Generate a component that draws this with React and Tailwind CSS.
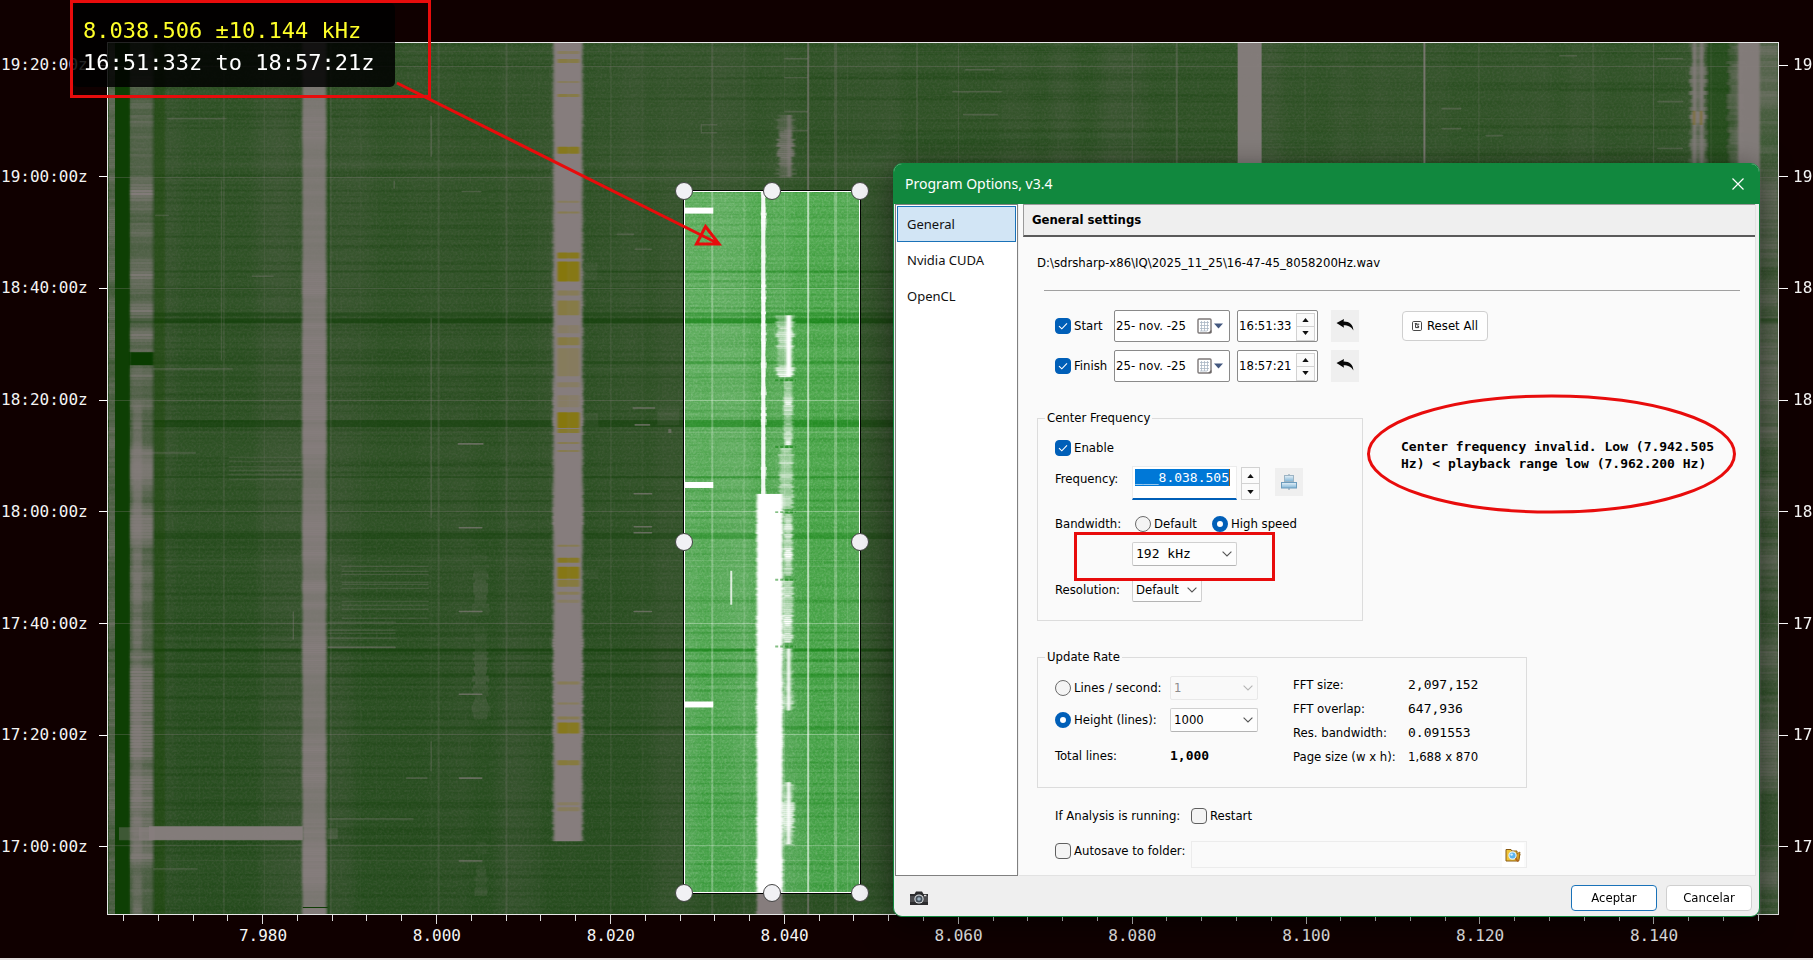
import React from "react";

const MONO = "font-['DejaVu_Sans_Mono','Liberation_Mono',monospace]";
const UI = "font-['DejaVu_Sans_Condensed','DejaVu_Sans',sans-serif]";
const SHELL = "font-['Noto_Sans','Open_Sans',sans-serif]";

/* ---------- spectrogram ---------- */

function prng(seed) {
  let s = seed;
  return () => {
    s = (s * 1664525 + 1013904223) % 4294967296;
    return s / 4294967296;
  };
}

function Column({ x, w, from = 42, to = 915, step = 3, min, max, seed, fill = "#fff", jitter = 0 }) {
  const rnd = prng(seed);
  const out = [];
  let level = rnd();
  for (let y = from; y < to; y += step) {
    level = Math.min(1, Math.max(0, level + (rnd() - 0.5) * 0.7));
    const a = min + (max - min) * level;
    const j = jitter * rnd();
    out.push(
      <rect key={y} x={x - j} y={y} width={w + 2 * j} height={Math.min(step, to - y)} fill={fill} opacity={a.toFixed(2)} />
    );
  }
  return <g>{out}</g>;
}

const faintLines = [
  [222, 2, 0.16], [329, 2, 0.16], [263, 1, 0.18], [437, 2, 0.2], [430, 1, 0.1], [505, 2, 0.22], [538, 1, 0.08],
  [610, 1, 0.25], [641, 2, 0.08], [711, 2, 0.26], [743, 2, 0.12], [784, 1, 0.14], [807, 2, 0.6], [834, 3, 0.25],
  [847, 1, 0.12], [916, 2, 0.2], [958, 1, 0.2], [1132, 1, 0.3], [1176, 2, 0.35], [1305, 1, 0.2], [1424, 2, 0.8],
  [1479, 1, 0.25], [1593, 2, 0.15], [1654, 1, 0.3], [1711, 2, 0.2], [198, 1, 0.06], [359, 1, 0.08], [375, 1, 0.06],
];

const darkBands = [
  [270, 2, 0.3], [287, 2, 0.25], [312, 4, 0.35], [318, 5, 0.6], [361, 3, 0.3], [376, 2, 0.2], [420, 7, 0.5], [476, 2, 0.3],
  [500, 2, 0.15], [533, 6, 0.35], [600, 2, 0.2], [632, 2, 0.2], [649, 3, 0.6], [660, 2, 0.2], [674, 4, 0.35], [727, 3, 0.3],
  [803, 2, 0.25], [235, 2, 0.2], [780, 1, 0.15],
];

const lightBands = [
  [117, 1, 0.1], [145, 2, 0.08], [155, 2, 0.08], [162, 3, 0.1], [178, 2, 0.1], [166, 1, 0.1], [50, 1, 0.12], [431, 2, 0.14],
  [330, 1, 0.08], [368, 1, 0.1], [560, 1, 0.12], [566, 1, 0.12], [664, 1, 0.1], [638, 1, 0.1], [687, 1, 0.1], [788, 1, 0.12], [861, 1, 0.12],
];

const dashes = [
  [457, 443, 26], [458, 527, 24], [458, 611, 24], [458, 694, 24], [458, 778, 24], [458, 861, 24],
  [632, 407, 23], [633, 493, 19], [633, 526, 19], [633, 532, 19], [633, 611, 19], [634, 424, 16],
  [616, 233, 18], [634, 248, 18], [461, 190, 20], [784, 57, 24], [784, 76, 24], [784, 110, 24], [784, 129, 24],
  [1442, 107, 20], [1442, 127, 20], [1486, 134, 18], [1560, 54, 18], [1658, 57, 26], [1658, 100, 26], [1658, 147, 26],
  [166, 117, 60], [154, 214, 14], [251, 275, 22], [152, 368, 80], [140, 452, 55], [152, 869, 45], [327, 647, 68],
  [327, 819, 86], [405, 778, 22], [952, 90, 50], [965, 68, 30], [963, 113, 35],
];

const combs = [
  [228, 73, [457, 461, 466, 470, 474, 479]],
  [341, 87, [566, 571, 574, 582, 584, 588, 601, 605, 609, 618]],
  [327, 68, [622, 630, 633, 638, 647]],
];

const yellows = [
  [50, 3, 0.3], [58, 4, 0.5], [80, 2, 0.3], [93, 3, 0.5], [146, 7, 0.85], [200, 2, 0.3], [211, 2, 0.4], [252, 6, 0.9],
  [261, 20, 1], [290, 5, 0.35], [300, 15, 0.5], [325, 8, 0.2], [337, 8, 0.5], [348, 28, 0.3], [382, 5, 0.25], [395, 12, 0.2],
  [412, 16, 1], [429, 4, 0.7], [442, 2, 0.4], [450, 2, 0.4], [545, 2, 0.4], [558, 5, 0.8], [567, 12, 0.95], [580, 7, 0.6],
  [592, 3, 0.35], [600, 3, 0.25], [682, 3, 0.35], [703, 2, 0.3], [717, 3, 0.4], [723, 11, 0.85], [761, 5, 0.6], [803, 3, 0.25], [808, 4, 0.3],
];

function Spectrogram() {
  const hGrid = [65, 176, 288, 400, 511, 623, 735, 846];
  return (
    <svg className="block h-full w-full" viewBox="107 42 1672 873" preserveAspectRatio="none" aria-hidden="true">
      <defs>
        <linearGradient id="base" x1="0" y1="0" x2="0" y2="1">
          <stop offset="0" stopColor="#53aa52" />
          <stop offset="0.45" stopColor="#4da74c" />
          <stop offset="1" stopColor="#409f42" />
        </linearGradient>
        <filter id="streaks" x="0" y="0" width="100%" height="100%" colorInterpolationFilters="sRGB">
          <feTurbulence type="fractalNoise" baseFrequency="0.0015 0.3" numOctaves="2" seed="4" />
          <feColorMatrix values="0 0 0 0 0  0 0 0 0 0.45  0 0 0 0 0  0.8 0 0 0 -0.36" />
        </filter>
        <filter id="grain" x="0" y="0" width="100%" height="100%" colorInterpolationFilters="sRGB">
          <feTurbulence type="fractalNoise" baseFrequency="0.45 0.45" numOctaves="2" seed="9" />
          <feColorMatrix values="0 0 0 0 1  0 0 0 0 1  0 0 0 0 1  0.36 0 0 0 -0.14" />
        </filter>
        <filter id="bars" x="0" y="0" width="100%" height="100%" colorInterpolationFilters="sRGB">
          <feTurbulence type="fractalNoise" baseFrequency="0.02 0.0008" numOctaves="2" seed="12" />
          <feColorMatrix values="0 0 0 0 1  0 0 0 0 0.9  0 0 0 0 1  0.45 0 0 0 -0.19" />
        </filter>
        <filter id="soft" x="-20%" y="-5%" width="140%" height="110%">
          <feGaussianBlur stdDeviation="1.2 0.3" />
        </filter>
      </defs>

      <rect x="107" y="42" width="1672" height="873" fill="url(#base)" />
      <rect x="107" y="42" width="1672" height="873" filter="url(#bars)" />
      <rect x="107" y="42" width="1672" height="873" filter="url(#streaks)" />
      <rect x="107" y="42" width="1672" height="873" filter="url(#grain)" />
      {darkBands.map(([y, h, a]) => (
        <rect key={y} x="107" y={y} width="1672" height={h} fill="#067a06" opacity={a} />
      ))}
      {lightBands.map(([y, h, a]) => (
        <rect key={y} x="107" y={y} width="1672" height={h} fill="#fff" opacity={a} />
      ))}
      {faintLines.map(([x, w, a]) => (
        <rect key={x} x={x} y="42" width={w} height="873" fill="#fff" opacity={a} />
      ))}

      {/* left edge */}
      <Column x={108} w={6} min={0.25} max={0.6} seed={3} step={2} />
      <rect x="114" y="42" width="15" height="873" fill="#0c800a" />
      <g filter="url(#soft)">
        <rect x="150" y="42" width="14" height="873" fill="#178a10" opacity="0.4" />
        <Column x={129} w={23} min={0.3} max={0.95} seed={21} step={3} to={352} />
        <rect x="129" y="352" width="23" height="13" fill="#067a06" />
        <Column x={129} w={23} min={0.3} max={0.85} seed={8} step={3} from={365} />
        <Column x={132} w={9} min={0.1} max={0.6} seed={77} step={4} from={365} />
      </g>
      <g filter="url(#soft)">
        <rect x="302" y="42" width="23" height="873" fill="#fff" opacity="0.82" />
        <Column x={301} w={25} min={0.2} max={0.9} seed={5} step={2} />
      </g>
      <rect x="327" y="42" width="2" height="873" fill="#0c800a" opacity="0.3" />
      <rect x="118" y="828" width="35" height="13" fill="#fff" opacity="0.4" />
      <rect x="138" y="828" width="16" height="13" fill="#fff" opacity="0.6" />
      <rect x="148" y="827" width="154" height="14" fill="#fff" opacity="0.97" />
      <rect x="327" y="829" width="10" height="11" fill="#fff" opacity="0.25" />
      <rect x="302" y="908" width="25" height="1" fill="#0a7a08" />

      {/* wide carrier with saturated bursts */}
      <g filter="url(#soft)">
        <rect x="554" y="42" width="27" height="800" fill="#fff" />
        <Column x={553} w={29} to={842} min={0.6} max={1} seed={14} step={3} jitter={1.5} />
      </g>
      <g filter="url(#soft)">
        {yellows.map(([y, h, a]) => (
          <g key={y} fill="#fff31c" opacity={a}>
            <rect x="557" y={y} width="11" height={h} rx="1" />
            <rect x="568" y={y} width="11" height={h} rx="1" opacity="0.94" />
          </g>
        ))}
      </g>
      <rect x="584" y="262" width="13" height="18" fill="#fff" opacity="0.1" />
      <rect x="584" y="413" width="14" height="14" fill="#fff" opacity="0.12" />
      <rect x="584" y="570" width="14" height="9" fill="#fff" opacity="0.1" />

      {/* short bursts */}
      {dashes.map(([x, y, w], i) => (
        <rect key={i} x={x} y={y} width={w} height="1.6" rx="0.8" fill="#fff" opacity={i < 12 ? 0.65 : 0.35} />
      ))}
      {combs.map(([x, w, ys]) =>
        ys.map((y) => <rect key={x + "-" + y} x={x} y={y} width={w} height="1" fill="#fff" opacity="0.35" />)
      )}
      <Column x={475} w={10} from={550} to={720} min={0} max={0.25} seed={31} step={3} jitter={4} />
      <Column x={476} w={9} from={840} to={897} min={0} max={0.25} seed={34} step={3} jitter={3} />
      <rect x="430" y="115" width="1" height="41" fill="#fff" opacity="0.5" />
      <rect x="292" y="612" width="1" height="28" fill="#fff" opacity="0.5" />
      <rect x="220" y="180" width="1" height="180" fill="#fff" opacity="0.3" />
      <rect x="430" y="318" width="1" height="200" fill="#fff" opacity="0.4" />
      <rect x="393" y="180" width="1" height="8" fill="#fff" opacity="0.5" />
      <rect x="430" y="742" width="1" height="30" fill="#fff" opacity="0.4" />
      <rect x="668" y="429" width="3" height="4" fill="#fff" opacity="0.6" />
      <path d="M701 123v10M701 124h16M701 132h16" stroke="#fff" strokeWidth="1.4" opacity="0.3" fill="none" />
      <Column x={657} w={22} from={406} to={425} min={0} max={0.2} seed={90} step={3} />

      {/* signals inside the selected range */}
      <rect x="761" y="191" width="4" height="303" fill="#fff" opacity="0.9" />
      <Column x={762} w={3} from={191} to={494} min={0.2} max={0.9} seed={41} step={3} jitter={1.5} />
      <g filter="url(#soft)">
        <rect x="757" y="494" width="25" height="421" fill="#fff" />
        <Column x={757} w={25} from={494} to={915} min={0.4} max={1} seed={42} step={2} jitter={1.5} />
      </g>
      <g filter="url(#soft)">
        <Column x={780} w={11} from={114} to={177} min={0.3} max={0.8} seed={43} step={2} jitter={5} />
        <rect x="787" y="114" width="4" height="62" fill="#fff" opacity="0.6" />
        <Column x={779} w={12} from={315} to={377} min={0.3} max={1} seed={44} step={2} jitter={4} />
        <rect x="786" y="315" width="5" height="61" fill="#fff" />
        <Column x={785} w={6} from={381} to={445} min={0.4} max={1} seed={45} step={2} jitter={2} />
        <Column x={781} w={10} from={448} to={509} min={0.4} max={1} seed={46} step={2} jitter={3} />
        <Column x={785} w={6} from={514} to={576} min={0.4} max={1} seed={47} step={2} jitter={2} />
        <Column x={784} w={7} from={581} to={643} min={0.4} max={1} seed={48} step={2} jitter={3} />
        <Column x={784} w={7} from={649} to={711} min={0.2} max={0.8} seed={49} step={2} jitter={4} />
        <rect x="787" y="649" width="3" height="62" fill="#fff" />
        <Column x={784} w={7} from={783} to={846} min={0.2} max={0.8} seed={50} step={2} jitter={4} />
        <rect x="787" y="783" width="3" height="62" fill="#fff" />
      </g>
      {[379, 446, 511, 579, 646].map((y) => (
        <path key={y} d={`M775 ${y + 1}H796`} stroke="#0a800a" strokeWidth="2" strokeDasharray="3 2" opacity="0.5" />
      ))}
      <rect x="683" y="207" width="30" height="6" fill="#fff" />
      <rect x="683" y="482" width="30" height="6" fill="#fff" />
      <rect x="683" y="702" width="30" height="6" fill="#fff" />
      <rect x="730" y="571" width="2" height="34" fill="#fff" opacity="0.8" />

      {/* right side */}
      <rect x="1238" y="42" width="24" height="873" fill="#fff" opacity="0.95" />
      <g filter="url(#soft)">
        <rect x="1694" y="42" width="3" height="873" fill="#fff" opacity="0.8" />
        <rect x="1701" y="42" width="3" height="873" fill="#fff" opacity="0.8" />
        <Column x={1693} w={12} to={200} min={0.2} max={0.7} seed={60} step={4} jitter={3} />
        <rect x="1692" y="111" width="14" height="11" fill="#fff" opacity="0.7" />
        <rect x="1694" y="110" width="2" height="14" fill="#eedd10" />
        <rect x="1701" y="110" width="2" height="14" fill="#eedd10" />
        <rect x="1708" y="42" width="28" height="873" fill="#0a800a" opacity="0.35" />
        <Column x={1732} w={9} min={0} max={0.5} seed={61} step={3} jitter={4} />
        <rect x="1739" y="42" width="22" height="873" fill="#fff" opacity="0.95" />
        <Column x={1761} w={18} min={0.15} max={0.6} seed={62} step={3} />
      </g>

      {hGrid.map((y) => (
        <rect key={y} x="107" y={y} width="1672" height="1" fill="#fff" opacity="0.32" />
      ))}
      <path d="M107 42H1779V915H107Z M684 191V893H860V191Z" fillRule="evenodd" fill="#120000" fillOpacity="0.51" />
    </svg>
  );
}

/* ---------- axes ---------- */

const times = ["19:20:00z", "19:00:00z", "18:40:00z", "18:20:00z", "18:00:00z", "17:40:00z", "17:20:00z", "17:00:00z"];
const freqs = ["7.980", "8.000", "8.020", "8.040", "8.060", "8.080", "8.100", "8.120", "8.140"];

function Selection() {
  const pos = [
    "left-0 top-0", "left-1/2 top-0", "left-full top-0",
    "left-0 top-1/2", "left-full top-1/2",
    "left-0 top-full", "left-1/2 top-full", "left-full top-full",
  ];
  return (
    <div className="absolute left-[683px] top-[190px] h-[704px] w-[178px] border border-black outline outline-1 -outline-offset-2 outline-white">
      {pos.map((p) => (
        <span
          key={p}
          className={`absolute size-[18px] -translate-x-1/2 -translate-y-1/2 rounded-full border border-[#444] bg-[#f1f1f4] ${p}`}
        />
      ))}
    </div>
  );
}

/* ---------- form parts ---------- */

function Check({ id, label, on = false }) {
  return (
    <span className="flex items-center gap-[3px]">
      <span className="relative size-4">
        <input
          id={id}
          type="checkbox"
          defaultChecked={on}
          className="peer block size-4 appearance-none rounded-[4px] border border-[#5f5f5f] bg-[#f4f4f4] checked:border-[#005fb8] checked:bg-[#005fb8]"
        />
        <svg viewBox="0 0 16 16" className="pointer-events-none absolute inset-0 hidden peer-checked:block" fill="none" stroke="#fff" strokeWidth="1.1">
          <path d="M4 8.2l2.8 2.6L12 5.4" />
        </svg>
      </span>
      <label htmlFor={id}>{label}</label>
    </span>
  );
}

function Radio({ id, name, label, on = false }) {
  return (
    <span className="flex items-center gap-[3px]">
      <input
        id={id}
        type="radio"
        name={name}
        defaultChecked={on}
        className="block size-4 appearance-none rounded-full border border-[#6b6b6b] bg-[#f4f4f4] checked:border-[5px] checked:border-[#005fb8] checked:bg-white"
      />
      <label htmlFor={id}>{label}</label>
    </span>
  );
}

function Select({ id, value, width, label, mono = false, disabled = false }) {
  return (
    <span className={`relative flex ${width}`}>
      <select
        id={id}
        aria-label={label}
        disabled={disabled}
        defaultValue={value}
        className={`h-6 w-full appearance-none rounded-[2px] border pl-[3px] pr-5 leading-5 ${mono ? MONO : ""} ${
          disabled ? "border-[#e8e8e8] bg-[#f9f9f9] text-[#8c8c8c]" : "border-[#d0d0d0] border-b-[#b4b4b4] bg-[#fdfdfd] text-black"
        }`}
      >
        <option>{value}</option>
      </select>
      <svg
        viewBox="0 0 10 6"
        className={`pointer-events-none absolute right-[5px] top-[9px] h-[6px] w-[10px] ${disabled ? "text-[#b5b5b5]" : "text-[#555]"}`}
        fill="none"
        stroke="currentColor"
        strokeWidth="1.1"
      >
        <path d="M0.6 0.6L5 5l4.4-4.4" />
      </svg>
    </span>
  );
}

function Spinner({ label, className }) {
  return (
    <span className={`flex flex-col ${className}`}>
      {["up", "down"].map((d) => (
        <button
          key={d}
          type="button"
          aria-label={`${label} ${d}`}
          className="-mb-px flex flex-1 items-center justify-center border border-[#d2d2d2] bg-[#fbfbfb]"
        >
          <svg viewBox="0 0 8 5" className="h-[4px] w-[7px]">
            <path d={d === "up" ? "M4 0L8 5H0Z" : "M0 0H8L4 5Z"} fill="#111" />
          </svg>
        </button>
      ))}
    </span>
  );
}

function TimeRow({ id, label, time }) {
  return (
    <div className="flex h-8 items-center">
      <div className="w-[59px]">
        <Check id={id} label={label} on />
      </div>
      <span className="flex h-8 w-[116px] items-center rounded-[2px] border border-[#8a8a8a] bg-white pl-px pr-[6px]">
        <input aria-label={`${label} date`} defaultValue="25- nov. -25" className="w-0 flex-1 bg-transparent" />
        <button type="button" aria-label={`${label} calendar`}>
          <svg viewBox="0 0 26 16" className="h-4 w-[26px]">
            <rect x="1" y="1" width="13" height="14" rx="1" fill="#fff" stroke="#7d7878" strokeWidth="1.4" />
            <path d="M3 4.5h9M3 7.5h9M3 10.5h9M3 13h7M4.5 3v10M7.5 3v10M10.5 3v10" stroke="#a9b6c4" strokeWidth="0.8" />
            <path d="M11 15l3.4-3.2V15z" fill="#6d6868" />
            <path d="M17 5.5h9l-4.5 5z" fill="#44587f" />
          </svg>
        </button>
      </span>
      <span className="ml-[7px] flex h-8 w-[81px] items-center rounded-[2px] border border-[#8a8a8a] bg-white pl-px pr-[2px]">
        <input aria-label={`${label} time`} defaultValue={time} className="w-0 flex-1 bg-transparent" />
        <Spinner label={`${label} time`} className="h-[27px] w-[19px]" />
      </span>
      <button type="button" aria-label={`Undo ${label}`} className="ml-[13px] flex h-8 w-7 items-center justify-center bg-[#efefef]">
        <svg viewBox="0 0 18 14" className="h-[14px] w-[18px]">
          <path d="M0.5 4L8 0L7.6 2.4C13 2.2 17.2 5 17.4 11.6C15.4 7.6 12 6.2 7.6 6.2L8 8.8Z" fill="#080808" />
        </svg>
      </button>
    </div>
  );
}

const stats = [
  ["FFT size:", "2,097,152", true],
  ["FFT overlap:", "647,936", true],
  ["Res. bandwidth:", "0.091553", true],
  ["Page size (w x h):", "1,688 x 870", false],
];

function OptionsDialog() {
  return (
    <section
      role="dialog"
      aria-labelledby="dlg-title"
      className={`absolute left-[893px] top-[163px] flex h-[754px] w-[867px] flex-col overflow-hidden rounded-[9px] border border-[#11883e] bg-[#efefef] text-[13px] leading-4 text-black shadow-[0_8px_32px_rgba(0,0,0,0.55)] ${UI}`}
    >
      <header className={`flex h-10 shrink-0 items-center justify-between bg-[#11883e] pl-[11px] pr-[15px] text-white ${SHELL}`}>
        <h1 id="dlg-title" className="text-[14px]">Program Options, v3.4</h1>
        <button type="button" aria-label="Close">
          <svg viewBox="0 0 12 12" className="size-3" stroke="#fff" strokeWidth="1.2">
            <path d="M0.5 0.5l11 11M11.5 0.5l-11 11" />
          </svg>
        </button>
      </header>

      <div className="flex min-h-0 flex-1 pl-px pr-[3px]">
        <nav className={`w-[123px] shrink-0 border border-[#808080] bg-white p-px text-[13px] text-[#111] ${SHELL}`}>
          <a href="#general" className="flex h-9 items-center border border-[#1a72b8] bg-[#d2e5f5] pl-[9px]">General</a>
          <a href="#cuda" className="flex h-9 items-center pl-[10px]">Nvidia CUDA</a>
          <a href="#opencl" className="flex h-9 items-center pl-[10px]">OpenCL</a>
        </nav>

        <main className="ml-px flex-1 border-b border-r border-[#e2e2e2] bg-[#fafafa] pl-1">
          <h2 className="flex h-[33px] items-center border-b-2 border-l border-t border-[#9a9a9a] border-b-[#5a5a5a] bg-[#efefef] pl-2 text-[13px] font-bold">
            General settings
          </h2>
          <div className="pl-[14px] pr-[15px]">
            <p className="mt-[18px]">D:\sdrsharp-x86\IQ\2025_11_25\16-47-45_8058200Hz.wav</p>
            <hr className="ml-[7px] mt-[19px] border-[#a0a0a0]" />

            <div className="mt-[19px] flex items-start">
              <div className="flex w-[365px] flex-col gap-2 pl-[18px]">
                <TimeRow id="start" label="Start" time="16:51:33" />
                <TimeRow id="finish" label="Finish" time="18:57:21" />
              </div>
              <button type="button" className="mt-px flex h-[30px] w-[86px] items-center justify-center gap-[5px] rounded-[4px] border border-[#cfcfcf] bg-[#fefefe]">
                <svg viewBox="0 0 10 10" className="size-[10px]" fill="none" stroke="#333">
                  <rect x="0.5" y="0.5" width="9" height="9" rx="1.2" strokeWidth="0.9" />
                  <path d="M7.2 3.2H3.6v3.4h3V5H5M2.8 2.6h2" strokeWidth="1" />
                </svg>
                Reset All
              </button>
            </div>

            <div className="mt-7 flex items-start">
              <fieldset className="h-[211px] w-[326px] border border-[#dcdcdc] pl-[17px]">
                <legend className="-ml-[10px] h-4 px-[2px]">Center Frequency</legend>
                <div className="mt-[14px] flex h-4 items-center">
                  <Check id="enable" label="Enable" on />
                </div>
                <div className="mt-[10px] flex h-[34px] items-start">
                  <label htmlFor="freq" className="mt-[5px] w-[77px]">Frequency:</label>
                  <span className="flex h-[34px] w-[105px] items-start border border-b-2 border-[#ececec] border-b-[#005fb8] bg-white pl-[2px] pt-[2px]">
                    <input id="freq" defaultValue="___8.038.505" className={`h-[17px] w-[95px] border-r border-[#8a5a20] bg-[#0078d7] text-right leading-4 text-white ${MONO}`} />
                  </span>
                  <Spinner label="Frequency" className="ml-1 mt-px h-8 w-[19px]" />
                  <button type="button" aria-label="Snap frequency" className="ml-[15px] mt-[2px] flex size-7 items-center justify-center bg-[#efefef]">
                    <svg viewBox="0 0 16 16" className="size-4">
                      <defs>
                        <linearGradient id="snap" x1="0" y1="0" x2="0" y2="1">
                          <stop offset="0" stopColor="#e6f1f8" />
                          <stop offset="1" stopColor="#7fb4d6" />
                        </linearGradient>
                      </defs>
                      <path d="M8 0v16" stroke="#7c98ab" />
                      <rect x="3.5" y="1.5" width="9" height="6" fill="url(#snap)" stroke="#9db4c4" />
                      <rect x="0.5" y="8.5" width="15" height="5.5" fill="url(#snap)" stroke="#6c9cbd" />
                    </svg>
                  </button>
                </div>
                <div className="mt-4 flex h-4 items-center">
                  <span className="w-20">Bandwidth:</span>
                  <span className="w-[77px]"><Radio id="bw-default" name="bw" label="Default" /></span>
                  <Radio id="bw-high" name="bw" label="High speed" on />
                </div>
                <div className="mt-[10px] pl-[77px]">
                  <Select id="bw" label="Bandwidth" value="192 kHz" width="w-[105px]" mono />
                </div>
                <div className="mt-3 flex h-6 items-center">
                  <label htmlFor="res" className="w-[77px]">Resolution:</label>
                  <Select id="res" value="Default" width="w-[70px]" />
                </div>
              </fieldset>
              <p role="alert" className={`ml-[38px] mt-7 w-[324px] text-[13px] font-bold leading-[17px] ${MONO}`}>
                Center frequency invalid. Low (7.942.505 Hz) &lt; playback range low (7.962.200 Hz)
              </p>
            </div>

            <fieldset className="mt-7 h-[139px] w-[490px] border border-[#dcdcdc] pl-[17px]">
              <legend className="-ml-[10px] h-4 px-[2px]">Update Rate</legend>
              <div className="mt-[8px] flex">
                <div className="mt-[3px] w-[238px]">
                  <div className="flex h-6 items-center">
                    <span className="w-[115px]"><Radio id="r-lines" name="rate" label="Lines / second:" /></span>
                    <Select id="lines" label="Lines per second" value="1" width="w-[88px]" disabled />
                  </div>
                  <div className="mt-2 flex h-6 items-center">
                    <span className="w-[115px]"><Radio id="r-height" name="rate" label="Height (lines):" on /></span>
                    <Select id="height" label="Height in lines" value="1000" width="w-[88px]" />
                  </div>
                  <div className="mt-3 flex h-6 items-center">
                    <span className="w-[115px]">Total lines:</span>
                    <span className={`font-bold ${MONO}`}>1,000</span>
                  </div>
                </div>
                <dl className="flex flex-col">
                  {stats.map(([k, v, mono]) => (
                    <div key={k} className="flex h-6 items-center">
                      <dt className="w-[115px]">{k}</dt>
                      <dd className={mono ? MONO : ""}>{v}</dd>
                    </div>
                  ))}
                </dl>
              </div>
            </fieldset>

            <div className="mt-[18px] flex h-5 items-center pl-[18px]">
              <span className="w-[136px]">If Analysis is running:</span>
              <Check id="restart" label="Restart" />
            </div>
            <div className="mt-[15px] flex w-[490px] items-start pl-[18px]">
              <div className="flex h-5 w-[136px] items-center">
                <Check id="autosave" label="Autosave to folder:" />
              </div>
              <span className="flex h-[27px] flex-1 items-center justify-end border border-[#ececec] bg-[#fafafa] pr-[2px]">
                <input aria-label="Autosave folder" disabled className="w-0 flex-1" />
                <button type="button" aria-label="Browse" className="flex h-6 w-[22px] items-center justify-center bg-white">
                  <svg viewBox="0 0 16 16" className="size-4">
                    <path d="M1 2.5h5l1 1.5h5v3h3L13.5 14H1z" fill="#f0c53a" stroke="#8a5a10" />
                    <path d="M12 6.5l3-1.5-1.2 9-2.8-1z" fill="#d9a025" stroke="#8a5a10" strokeWidth="0.7" />
                    <circle cx="7.5" cy="8.5" r="3.6" fill="#5ab4f0" stroke="#dff0fb" strokeWidth="1.2" />
                    <circle cx="6.6" cy="7.6" r="1.2" fill="#d8f0ff" />
                    <path d="M10.4 11.4l2.8 3" stroke="#b5651d" strokeWidth="1.6" />
                  </svg>
                </button>
              </span>
            </div>
          </div>
        </main>
      </div>

      <footer className="flex h-10 shrink-0 items-center gap-[9px] pl-4 pr-[7px] pt-[3px]">
        <button type="button" aria-label="Screenshot" className="mr-auto">
          <svg viewBox="0 0 18 14" className="h-[14px] w-[18px]">
            <path d="M0 3h4.5l1.5-2.5h6L13.5 3H18v11H0z" fill="#2c2c2e" />
            <rect x="0" y="5" width="18" height="6" fill="#4b4b4e" />
            <circle cx="9" cy="8" r="4.6" fill="#e2e4e6" />
            <circle cx="9" cy="8" r="3.6" fill="#47525c" />
            <circle cx="9" cy="8" r="1.8" fill="#9db0be" />
            <rect x="14" y="3.8" width="2.4" height="1.4" fill="#ddd" />
          </svg>
        </button>
        <button type="button" className="h-[26px] w-[86px] rounded-[4px] border border-[#1a72b8] bg-white">Aceptar</button>
        <button type="button" className="h-[26px] w-[86px] rounded-[4px] border border-[#cfcfcf] bg-white">Cancelar</button>
      </footer>
    </section>
  );
}

export default function App() {
  return (
    <div className="relative flex h-screen min-h-[940px] flex-col overflow-hidden border-b-2 border-[#e4e0e0] bg-[#100000] pt-[42px]">
      <div className={`flex min-h-0 flex-1 text-[16px] leading-6 text-[#f4f4f4] ${MONO}`}>
        <div className="flex w-[107px] shrink-0 flex-col justify-between pb-[56px] pt-[11px]">
          {times.map((t) => (
            <div key={t} className="flex items-center justify-between pl-px">
              {t}
              <i className="h-px w-[8px] bg-white" />
            </div>
          ))}
        </div>
        <div className="min-w-0 flex-1 border border-[#e8e8e8]">
          <Spectrogram />
        </div>
        <div className="flex w-[34px] shrink-0 flex-col justify-between overflow-hidden pb-[56px] pt-[11px]">
          {times.map((t) => (
            <div key={t} className="flex items-center gap-[5px]">
              <i className="h-px w-[9px] shrink-0 bg-white" />
              {t.slice(0, 2)}
            </div>
          ))}
        </div>
      </div>
      <div className="h-[43px] shrink-0 pl-[107px] pr-[34px]">
        <div className="flex h-[9px] items-start justify-between pl-4 pr-5">
          {Array.from({ length: 48 }, (_, i) => (
            <i key={i} className={i % 5 === 4 ? "h-[9px] w-px bg-[#ddd]" : "h-[6px] w-px bg-[#ddd]"} />
          ))}
        </div>
        <div className={`flex justify-between pl-32 pr-[97px] text-center text-[16px] leading-6 text-[#f4f4f4] ${MONO}`}>
          {freqs.map((f) => (
            <span key={f} className="w-14">{f}</span>
          ))}
        </div>
      </div>

      <Selection />

      <div className={`absolute left-[73px] top-[3px] w-[322px] rounded-[5px] bg-black/85 pb-2 pl-[10px] pt-3 text-[22px] leading-8 text-white ${MONO}`}>
        <div className="text-[#ffff28]">8.038.506 ±10.144 kHz</div>
        <div>16:51:33z to 18:57:21z</div>
      </div>

      <OptionsDialog />

      <svg className="pointer-events-none absolute inset-0 h-full w-full" fill="none" stroke="#e80c0c" strokeWidth="3" aria-hidden="true">
        <rect x="71.5" y="1.5" width="358" height="95" />
        <path d="M397 83L719 244M705.500 226.500L719 244L696.500 244Z" />
        <rect x="1075.500" y="533.500" width="198" height="46" />
        <ellipse cx="1551.500" cy="454" rx="183" ry="58" />
      </svg>
    </div>
  );
}
